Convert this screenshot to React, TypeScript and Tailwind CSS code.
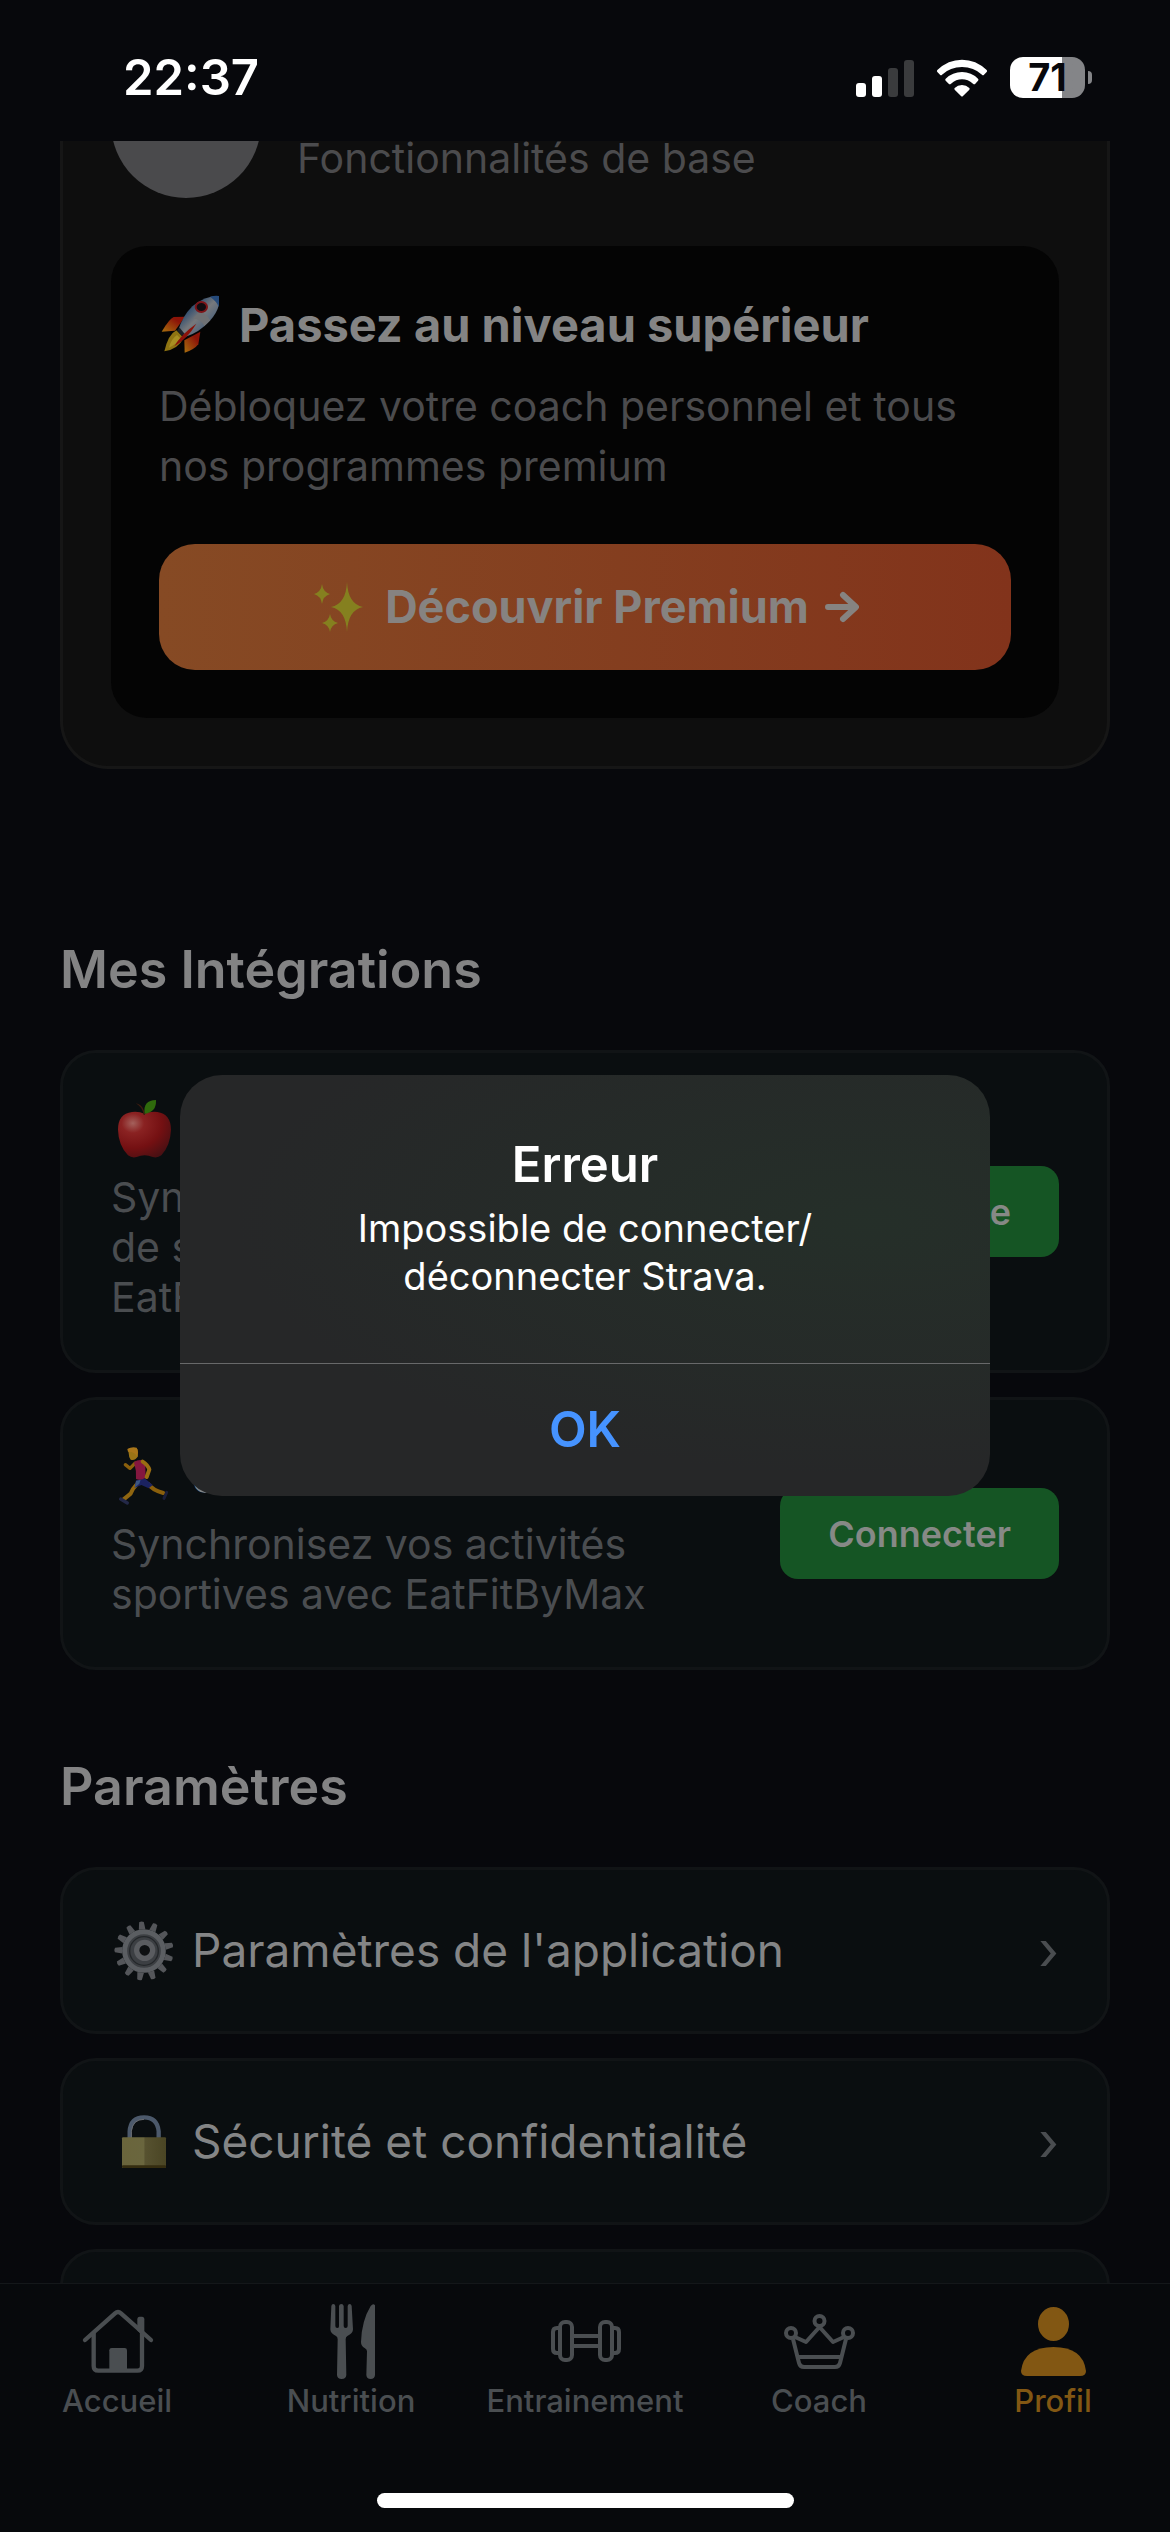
import React from "react";

function StatusBar() {
  return (
    <header className="flex h-[141px] shrink-0 items-start justify-between pl-[123px] pr-[78px] pt-[48px]">
      <time className="text-[49px] leading-[60px] font-semibold text-white">22:37</time>
      <div className="flex items-center gap-[22px] pt-[9px]">
        <svg className="h-[38px] w-[58px]" viewBox="0 0 58 38" aria-label="Réseau">
          <rect x="0" y="24" width="10" height="14" rx="3" fill="#fff" />
          <rect x="16" y="17" width="10" height="21" rx="3" fill="#fff" />
          <rect x="32" y="9" width="10" height="29" rx="3" fill="#3a3b3d" />
          <rect x="48" y="1" width="10" height="37" rx="3" fill="#3a3b3d" />
        </svg>
        <svg className="h-[38px] w-[52px]" viewBox="409 85 152 114" aria-label="Wi-Fi">
          <g fill="#fff">
            <path d="M411 118Q443 87 485 87T559 118Q562 121 559 124L551 132Q548 135 545 132Q520 109 485 109T425 132Q422 135 419 132L411 124Q408 121 411 118Z" />
            <path d="M436 144Q457 124 485 124T533 144Q536 147 533 150L525 159Q522 163 518 159Q503 146 485 146T452 159Q448 163 445 159L436 150Q433 147 436 144Z" />
            <path d="M463 172Q472 163 485 163T507 172Q509 174 507 177L488 196Q485 199 482 196L463 177Q461 174 463 172Z" />
          </g>
        </svg>
        <div className="flex items-center gap-[3px]">
          <div className="flex h-[41px] w-[75px] items-center justify-center rounded-[13px] bg-linear-to-r from-white from-70% to-[#848588] to-70% text-[38px] leading-[41px] font-bold text-[#07080c]">
            71
          </div>
          <div className="h-[13px] w-[4px] rounded-r-full bg-[#848588]" />
        </div>
      </div>
    </header>
  );
}

function Rocket() {
  return (
    <svg className="size-[60px] shrink-0" viewBox="60 39 180 180" aria-hidden="true">
      <defs>
        <linearGradient id="rk-body" x1="0" y1="0" x2="1" y2="1">
          <stop offset="0.25" stopColor="#24456b" />
          <stop offset="0.5" stopColor="#77797c" />
          <stop offset="0.85" stopColor="#38577c" />
        </linearGradient>
        <linearGradient id="rk-fin" x1="1" y1="0" x2="0" y2="1">
          <stop offset="0.3" stopColor="#8c1408" />
          <stop offset="1" stopColor="#a8700e" />
        </linearGradient>
      </defs>
      <path d="M138 107L104 108Q92 112 68 152L108 149Z" fill="url(#rk-fin)" />
      <path d="M184 152L178 190Q166 206 137 215L136 178Z" fill="url(#rk-fin)" />
      <path d="M112 148Q88 160 76 211Q118 204 134 170Z" fill="#8f7412" />
      <path d="M114 162Q96 174 90 200Q112 190 124 172Z" fill="#a88f22" />
      <path d="M243 45Q200 42 160 76Q130 106 118 148L138 168Q180 156 214 118Q244 84 243 45Z" fill="url(#rk-body)" />
      <path d="M243 45Q226 43 213 47Q232 60 240 78Q244 62 243 45Z" fill="#254a7a" />
      <path d="M162 112Q190 118 196 135Q206 127 214 118Q202 96 180 92Z" fill="#6f7174" />
      <path d="M122 140L114 148L128 164L138 160Z" fill="#1b2028" />
      <path d="M172 128Q126 160 106 196Q146 172 172 128Z" fill="#8a120a" />
      <ellipse cx="187" cy="78" rx="17" ry="15" fill="#100c10" stroke="#7c1418" strokeWidth="6" />
    </svg>
  );
}

function Sparkles() {
  return (
    <svg className="h-[54px] w-[54px] shrink-0" viewBox="312 581 54 54" aria-hidden="true">
      <g fill="#85801f">
        <path d="M348 583Q349 605 364 608Q349 611 348 633Q347 611 332 608Q347 605 348 583Z" />
        <path d="M323 585Q324 593 331 595Q324 597 323 605Q322 597 315 595Q322 593 323 585Z" />
        <path d="M331 615Q332 622 339 624Q332 626 331 633Q330 626 323 624Q330 622 331 615Z" />
      </g>
    </svg>
  );
}

function Apple() {
  return (
    <svg className="size-[60px] shrink-0" viewBox="42 63 180 180" aria-hidden="true">
      <defs>
        <radialGradient id="ap" cx="0.28" cy="0.25" r="0.85">
          <stop offset="0" stopColor="#a4615c" />
          <stop offset="0.25" stopColor="#8a2222" />
          <stop offset="0.65" stopColor="#741012" />
          <stop offset="1" stopColor="#4a1013" />
        </radialGradient>
      </defs>
      <path d="M133 104Q150 97 172 99Q212 104 213 152Q211 200 184 229Q172 238 158 234Q134 224 110 234Q96 238 84 229Q55 198 54 152Q54 104 96 99Q118 97 133 104Z" fill="url(#ap)" />
      <path d="M131 108Q128 84 107 73Q118 74 128 86Q134 96 135 108Z" fill="#3d1c10" />
      <path d="M134 104Q128 64 168 63Q170 100 134 104Z" fill="#2f6a0c" />
    </svg>
  );
}

function Runner() {
  return (
    <svg className="size-[60px] shrink-0" viewBox="42 1104 180 180" aria-hidden="true">
      <g fill="none" strokeLinecap="round" strokeLinejoin="round">
        <path d="M106 1152L90 1168L76 1157" stroke="#8a5f0c" strokeWidth="10" />
        <path d="M110 1216Q98 1228 92 1244L70 1262" stroke="#8f6510" strokeWidth="12" />
        <path d="M146 1216Q156 1232 190 1242" stroke="#8a5f0c" strokeWidth="12" />
        <path d="M62 1260L82 1272" stroke="#232847" strokeWidth="10" />
        <path d="M200 1240L192 1258" stroke="#1a1e3a" strokeWidth="9" />
      </g>
      <path d="M108 1204L134 1198L158 1218L146 1228L124 1218L104 1226Z" fill="#1b2260" />
      <path d="M108 1206L122 1202L118 1214L104 1226Z" fill="#3a5584" />
      <path d="M102 1150Q116 1140 130 1145L136 1162L137 1196Q122 1206 108 1200Q110 1176 102 1150Z" fill="#84173f" />
      <path d="M128 1148Q144 1158 148 1172L140 1194" fill="none" stroke="#9a6d12" strokeWidth="12" strokeLinecap="round" strokeLinejoin="round" />
      <path d="M84 1110Q96 1104 112 1110L114 1132Q106 1146 92 1142Q86 1134 86 1122Z" fill="#9a7416" />
      <path d="M82 1110Q96 1102 110 1106Q118 1120 110 1132Q106 1118 84 1118Z" fill="#a9761a" />
    </svg>
  );
}

const teeth = [0, 1, 2, 3, 4, 5, 6, 7, 8, 9, 10, 11, 12];

function Gear() {
  return (
    <svg className="size-[60px] shrink-0" viewBox="42 91 180 180" aria-hidden="true">
      {teeth.map((n) => (
        <path key={n} d="M122 116L125 94Q132 90 139 94L142 116Z" fill="#54565a" transform={`rotate(${n * 27.7 - 5} 132 181)`} />
      ))}
      <circle cx="132" cy="181" r="58" fill="#3c3f43" stroke="#5b5e62" strokeWidth="15" />
      <circle cx="132" cy="181" r="43" fill="none" stroke="#24272a" strokeWidth="4" />
      <circle cx="134" cy="179" r="24" fill="#0e1012" stroke="#5a5c60" strokeWidth="16" />
    </svg>
  );
}

function Padlock() {
  return (
    <svg className="size-[60px] shrink-0" viewBox="42 664 180 180" aria-hidden="true">
      <defs>
        <linearGradient id="pl" x1="0" y1="0" x2="1" y2="0">
          <stop offset="0" stopColor="#6a653c" />
          <stop offset="0.5" stopColor="#6a663e" />
          <stop offset="0.52" stopColor="#575230" />
          <stop offset="1" stopColor="#4a4524" />
        </linearGradient>
      </defs>
      <path d="M89 746V722Q92 680 132 680T176 722V746" fill="none" stroke="#4c596b" strokeWidth="13" />
      <path d="M94 746V722Q98 686 132 686" fill="none" stroke="#6a6c70" strokeWidth="3" />
      <rect x="66" y="740" width="132" height="92" rx="3" fill="url(#pl)" />
      <rect x="66" y="824" width="132" height="8" rx="3" fill="#352d10" />
    </svg>
  );
}

function PremiumCard() {
  return (
    <section className="flex flex-col rounded-b-[48px] border-x-3 border-b-3 border-[#161616] bg-[#0e0e0e] px-[48px] pb-[48px]">
      <div className="-mt-[93px] flex items-end gap-[36px]">
        <div className="size-[150px] shrink-0 rounded-full bg-[#4a4a4c]" />
        <p className="pb-[15px] text-[41px] leading-[50px] text-[#4b4b4d]">Fonctionnalités de base</p>
      </div>
      <div className="mt-[48px] rounded-[36px] bg-[#040404] p-[48px]">
        <h2 className="flex items-center gap-[20px] text-[47px] leading-[57px] font-bold text-[#848484]">
          <Rocket />
          Passez au niveau supérieur
        </h2>
        <p className="mt-[22px] text-[41px] leading-[60px] text-[#4b4b4d]">
          Débloquez votre coach personnel et tous nos programmes premium
        </p>
        <button className="mt-[48px] flex h-[126px] w-full items-center justify-center gap-[20px] rounded-[36px] bg-linear-to-r from-[#864a24] to-[#82331b] text-[45px] font-bold text-[#868381]">
          <Sparkles />
          <span className="flex items-center gap-[16px]">
            Découvrir Premium
            <svg className="h-[32px] w-[34px]" viewBox="0 0 34 32" fill="none" stroke="currentColor" strokeWidth="6" strokeLinecap="round" strokeLinejoin="round" aria-hidden="true">
              <path d="M3 16H30M18 4L31 16L18 28" />
            </svg>
          </span>
        </button>
      </div>
    </section>
  );
}

function Integration({ icon, title, text, action }: { icon: React.ReactNode; title: string; text: string; action: string }) {
  return (
    <article className="flex items-center justify-between gap-[48px] rounded-[36px] border-3 border-[#111416] bg-[#0a0e10] p-[48px]">
      <div className="max-w-[560px]">
        <h3 className="flex h-[57px] items-center gap-[18px] pl-[3px] text-[46px] leading-[57px] font-semibold text-[#848586]">
          {icon}
          {title}
        </h3>
        <p className="mt-[14px] whitespace-pre-line text-[41px] leading-[50px] text-[#4a4d50]">{text}</p>
      </div>
      <button className="h-[91px] shrink-0 rounded-[18px] bg-[#155524] px-[48px] text-[36px] font-semibold text-[#868986]">
        {action}
      </button>
    </article>
  );
}

function SettingRow({ icon, label }: { icon: React.ReactNode; label: string }) {
  return (
    <button className="flex w-full items-center gap-[18px] rounded-[36px] border-3 border-[#111416] bg-[#0a0e10] py-[48px] pl-[51px] pr-[48px] text-left">
      {icon}
      <span className="flex-1 text-[46px] leading-[65px] text-[#848586]">{label}</span>
      <span className="text-[54px] leading-[65px] text-[#4a4d50]">›</span>
    </button>
  );
}

function HomeIcon() {
  return (
    <svg className="size-[78px]" viewBox="54 39 234 234" fill="none" stroke="currentColor" strokeWidth="13" strokeLinecap="round" strokeLinejoin="round">
      <path d="M75 150L165 70Q174 62 183 70L273 150" />
      <path d="M101 130V228Q101 242 115 242H232Q246 242 246 228V130" />
      <path d="M148 242V181Q148 174 155 174H194Q201 174 201 181V242Z" fill="currentColor" stroke="none" />
      <path d="M232 122V88Q232 80 239 80H246Q253 80 253 88V140Z" fill="currentColor" stroke="none" />
    </svg>
  );
}

function NutritionIcon() {
  return (
    <svg className="size-[78px]" viewBox="756 39 234 234" fill="currentColor">
      <path d="M814 48Q815 42 820 42T826 48V108Q826 114 832 114T837 108V48Q838 42 844 42T851 48V108Q851 114 857 114T863 108V48Q864 42 869 42T875 48L879 118Q879 130 862 138Q857 141 857 148L859 255Q858 267 845 267T831 255L833 148Q833 141 828 138Q811 130 811 118Z" />
      <path d="M945 46V255Q944 267 932 267T919 255L921 184Q921 178 914 174Q903 168 903 156Q905 92 932 48Q940 38 945 46Z" />
    </svg>
  );
}

function TrainingIcon() {
  return (
    <svg className="size-[78px]" viewBox="546 2303 78 78" fill="none" stroke="currentColor" strokeWidth="4">
      <rect x="560" y="2322" width="12" height="38" rx="5" />
      <rect x="600" y="2322" width="12" height="38" rx="5" />
      <path d="M560 2328H557Q553 2328 553 2332V2349Q553 2353 557 2353H560M612 2328H615Q619 2328 619 2332V2349Q619 2353 615 2353H612M572 2336H600M572 2346H600" />
    </svg>
  );
}

function CoachIcon() {
  return (
    <svg className="size-[78px]" viewBox="780 2303 78 78" fill="none" stroke="currentColor" strokeWidth="4" strokeLinejoin="round">
      <circle cx="791" cy="2333" r="5" />
      <circle cx="819.5" cy="2321" r="5" />
      <circle cx="848" cy="2333" r="5" />
      <path d="M793 2339L799 2363Q800 2367 804 2367H835Q839 2367 840 2363L846 2339M795 2337L806 2342L819.5 2327L833 2342L844 2337M798 2357H841" />
    </svg>
  );
}

function ProfileIcon() {
  return (
    <svg className="size-[78px]" viewBox="1014 2303 78 78" fill="currentColor">
      <ellipse cx="1053.5" cy="2324" rx="15.5" ry="17" />
      <path d="M1021 2371Q1024 2347 1053.5 2347T1086 2371Q1086 2376 1080 2376H1027Q1021 2376 1021 2371Z" />
    </svg>
  );
}

const tabs = [
  { label: "Accueil", icon: <HomeIcon /> },
  { label: "Nutrition", icon: <NutritionIcon /> },
  { label: "Entrainement", icon: <TrainingIcon /> },
  { label: "Coach", icon: <CoachIcon /> },
  { label: "Profil", icon: <ProfileIcon />, active: true },
];

function TabBar() {
  return (
    <footer className="flex shrink-0 flex-col items-center border-t border-[#14171a] bg-[#07090c] pb-[24px] pt-[19px]">
      <nav className="grid w-full grid-cols-5">
        {tabs.map((t) => (
          <a
            key={t.label}
            href="#"
            aria-current={t.active ? "page" : undefined}
            className={`flex flex-col items-center gap-[2px] text-[31px] leading-[36px] font-medium ${t.active ? "text-[#825713]" : "text-[#4a4e51]"}`}
          >
            {t.icon}
            {t.label}
          </a>
        ))}
      </nav>
      <div className="mt-[74px] h-[15px] w-[417px] rounded-full bg-white" />
    </footer>
  );
}

function ErrorDialog() {
  return (
    <div className="absolute inset-0 flex items-center justify-center pb-[102px] pt-[141px]">
      <div
        role="alertdialog"
        aria-modal="true"
        aria-labelledby="alert-title"
        aria-describedby="alert-text"
        className="w-[810px] overflow-hidden rounded-[42px] bg-[#262728] bg-radial-[at_85%_35%] from-[#252f29] to-[#262728] to-65%"
      >
        <div className="flex flex-col items-center px-[48px] pb-[63px] pt-[59px] text-center text-white">
          <h2 id="alert-title" className="text-[49px] leading-[62px] font-semibold">Erreur</h2>
          <p id="alert-text" className="mt-[8px] text-[38px] leading-[48px]">
            Impossible de connecter/
            <br />
            déconnecter Strava.
          </p>
        </div>
        <button className="h-[133px] w-full border-t border-[#68696a] text-[49px] font-semibold text-[#4693ff]">OK</button>
      </div>
    </div>
  );
}

export default function App() {
  return (
    <div className="relative flex h-screen flex-col overflow-hidden bg-[#07080c] font-['Inter','Liberation_Sans',sans-serif]">
      <StatusBar />
      <main className="min-h-0 flex-1 overflow-hidden px-[60px]">
        <PremiumCard />

        <h2 className="mt-[168px] text-[52px] leading-[65px] font-semibold text-[#838384]">Mes Intégrations</h2>
        <div className="mt-[48px] flex flex-col gap-[24px]">
          <Integration
            icon={<Apple />}
            title="Apple Santé"
            text={"Synchronisez vos données\nde santé avec\nEatFitByMax"}
            action="Synchronise"
          />
          <Integration
            icon={<Runner />}
            title="Strava"
            text={"Synchronisez vos activités\nsportives avec EatFitByMax"}
            action="Connecter"
          />
        </div>

        <h2 className="mt-[84px] text-[52px] leading-[65px] font-semibold text-[#838384]">Paramètres</h2>
        <div className="mt-[48px] flex flex-col gap-[24px]">
          <SettingRow icon={<Gear />} label="Paramètres de l'application" />
          <SettingRow icon={<Padlock />} label="Sécurité et confidentialité" />
          <div className="h-[167px] rounded-[36px] border-3 border-[#111416] bg-[#0a0e10]" />
        </div>
      </main>
      <TabBar />
      <ErrorDialog />
    </div>
  );
}
